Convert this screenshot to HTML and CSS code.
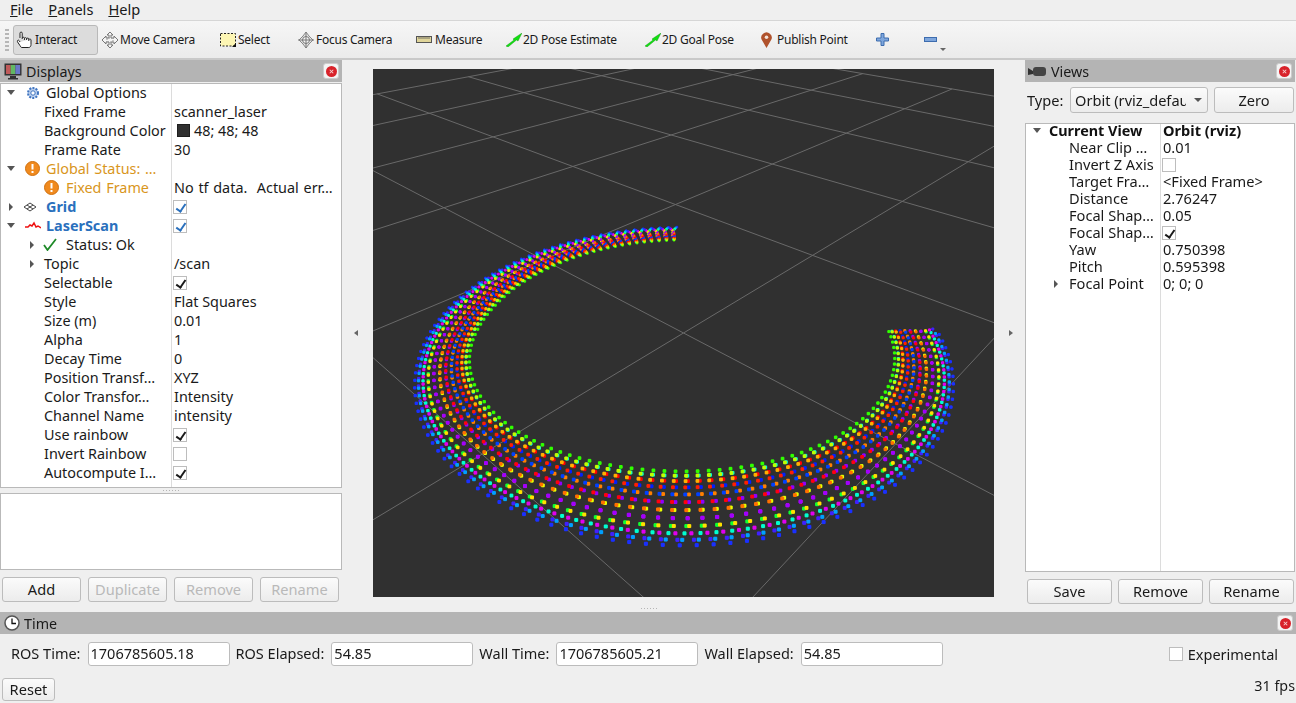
FILE: index.html
```html
<!DOCTYPE html>
<html lang="en">
<head>
<meta charset="utf-8">
<title>RViz</title>
<link rel="stylesheet" href="styles.css">
</head>
<body>
<nav class="menubar">
  <span class="menu"><u>F</u>ile</span>
  <span class="menu"><u>P</u>anels</span>
  <span class="menu"><u>H</u>elp</span>
</nav>
<div class="toolbar">
  <span class="grip"></span>
  <div class="tool tool-interact">
    <svg class="ic" width="20" height="20" viewBox="0 0 20 20"><path d="M5 8V3.200a1.100 1.100 0 0 1 2.200 0V9M7.200 8.200c0-1.300 2.200-1.300 2.200 0V10M9.400 8.600c0-1.200 2.200-1.200 2.200 0V10M11.600 9c0-1.200 2.200-1.200 2.200 0v2M13.800 9.600c.4-1 2.200-.8 2.200.4v4.600c0 1.400-.8 2.900-2.200 2.900H7c-1.200 0-1.600-1.200-2.200-2.200L2.600 12c-.8-1.600.9-2.600 1.700-1.200L5 12" fill="#fff" stroke="#222" stroke-width="1"/></svg>
    <span>Interact</span>
  </div>
  <div class="tool tool-move">
    <svg class="ic" width="18" height="18" viewBox="0 0 18 18"><path d="M9 1l3 3h-2v3h3V5l4 4-4 4v-2h-3v3h2l-3 3-3-3h2v-3H5v2L1 9l4-4v2h3V4H6z" fill="#f4f4f4" stroke="#777" stroke-width="1"/><path d="M6 7h6v4H6z" fill="none" stroke="#999" stroke-dasharray="1 1"/></svg>
    <span>Move Camera</span>
  </div>
  <div class="tool tool-select">
    <svg class="ic" width="16" height="14" viewBox="0 0 16 14"><rect x=".5" y=".5" width="15" height="12.500" fill="#fdf6b4" stroke="#222" stroke-dasharray="2 1.500"/><path d="M16 10v4h-4z" fill="#111"/></svg>
    <span>Select</span>
  </div>
  <div class="tool tool-focus">
    <svg class="ic" width="18" height="18" viewBox="0 0 18 18"><path d="M9 1l3 4 4 4-4 4-3 4-3-4-4-4 4-4z" fill="#e6e6e6" stroke="#888"/><circle cx="9" cy="9" r="3.500" fill="#f6f6f6" stroke="#777"/><path d="M9 1v16M1 9h16" stroke="#777" stroke-width="1"/></svg>
    <span>Focus Camera</span>
  </div>
  <div class="tool tool-measure">
    <svg class="ic" width="16" height="7" viewBox="0 0 16 7"><rect x=".5" y=".5" width="15" height="6" fill="#e0d59a" stroke="#555"/><path d="M3 1v2M5 1v2M7 1v2M9 1v2M11 1v2M13 1v2" stroke="#555" stroke-width=".8"/></svg>
    <span>Measure</span>
  </div>
  <div class="tool tool-pose">
    <svg class="ic" width="17" height="14" viewBox="0 0 17 14"><path d="M1 13L9 7l-1-1 9-6-4 8-1.500-1L3 14z" fill="#12e012" stroke="#0a8a0a" stroke-width=".4"/></svg>
    <span>2D Pose Estimate</span>
  </div>
  <div class="tool tool-goal">
    <svg class="ic" width="17" height="14" viewBox="0 0 17 14"><path d="M1 13L9 7l-1-1 9-6-4 8-1.500-1L3 14z" fill="#12e012" stroke="#0a8a0a" stroke-width=".4"/></svg>
    <span>2D Goal Pose</span>
  </div>
  <div class="tool tool-point">
    <svg class="ic" width="11" height="16" viewBox="0 0 11 16"><path d="M5.500 16L1.200 8.500A5.200 5.200 0 1 1 9.800 8.500z" fill="#b0522c"/><circle cx="5.500" cy="5.200" r="1.800" fill="#f2e4da"/></svg>
    <span>Publish Point</span>
  </div>
  <svg class="plus" width="13" height="13" viewBox="0 0 13 13"><path d="M5 .5h3v4.500h4.500v3H8v4.500H5V8H.5V5H5z" fill="#7ea6dc" stroke="#3d6cae"/></svg>
  <svg class="minus" width="13" height="5" viewBox="0 0 13 5"><rect x=".5" y=".5" width="12" height="4" fill="#7ea6dc" stroke="#3d6cae"/></svg>
  <span class="more"></span>
</div>

<main class="workspace">
  <section class="left">
    <header class="title">
      <svg class="title-ic" width="18" height="17" viewBox="0 0 18 17"><rect x=".5" y=".5" width="17" height="12" fill="#333"/><rect x="2" y="2" width="4.700" height="9" fill="#c05a5a"/><rect x="6.700" y="2" width="4.700" height="9" fill="#62b862"/><rect x="11.400" y="2" width="4.700" height="9" fill="#6a78c8"/><path d="M6 13h6v2h2v1.500H4V15h2z" fill="#333"/></svg>
      <span>Displays</span>
      <button class="close"><i></i></button>
    </header>
    <div class="tree tree-displays">
      <div class="row"><div class="name p7"><b class="arr open"></b><svg class="ri gear" width="14" height="14" viewBox="0 0 14 14"><circle cx="7" cy="7" r="5" fill="#bcd0ee" stroke="#3f74c0" stroke-width="2" stroke-dasharray="2 1.200"/><circle cx="7" cy="7" r="2.200" fill="#fff" stroke="#3f74c0"/></svg><span>Global Options</span></div><div class="val"></div></div>
      <div class="row"><div class="name p44"><span>Fixed Frame</span></div><div class="val">scanner_laser</div></div>
      <div class="row"><div class="name p44"><span>Background Color</span></div><div class="val"><i class="swatch"></i>48; 48; 48</div></div>
      <div class="row"><div class="name p44"><span>Frame Rate</span></div><div class="val">30</div></div>
      <div class="row warn"><div class="name p7"><b class="arr open"></b><svg class="ri warn-ic" width="15" height="15" viewBox="0 0 15 15"><circle cx="7.500" cy="7.500" r="7" fill="#f08a1e" stroke="#d0700e"/><rect x="6.500" y="3" width="2" height="5.500" fill="#fff"/><rect x="6.500" y="10" width="2" height="2" fill="#fff"/></svg><span>Global Status: …</span></div><div class="val"></div></div>
      <div class="row warn"><div class="name p44"><svg class="ri fix-ic" width="15" height="15" viewBox="0 0 15 15"><circle cx="7.500" cy="7.500" r="7" fill="#f08a1e" stroke="#d0700e"/><rect x="6.500" y="3" width="2" height="5.500" fill="#fff"/><rect x="6.500" y="10" width="2" height="2" fill="#fff"/></svg><span>Fixed Frame</span></div><div class="val plain">No tf data.&nbsp; Actual err…</div></div>
      <div class="row strong"><div class="name p7"><b class="arr"></b><svg class="ri grid-ic" width="14" height="10" viewBox="0 0 14 10"><path d="M7 1l6 4-6 4-6-4zM4 3l6 4M10 3L4 7" fill="none" stroke="#444"/></svg><span>Grid</span></div><div class="val"><i class="cb blue"></i></div></div>
      <div class="row strong"><div class="name p7"><b class="arr open"></b><svg class="ri laser-ic" width="16" height="9" viewBox="0 0 16 9"><path d="M0 6h3l2-2 2 1 2-3 2 4 2-1 3 2" fill="none" stroke="#ee1111" stroke-width="1.500"/></svg><span>LaserScan</span></div><div class="val"><i class="cb blue"></i></div></div>
      <div class="row"><div class="name p28"><b class="arr"></b><svg class="ri check-ic" width="14" height="13" viewBox="0 0 14 13"><path d="M1 7l3.500 5L13 1" fill="none" stroke="#1e8a28" stroke-width="1.800"/></svg><span>Status: Ok</span></div><div class="val"></div></div>
      <div class="row"><div class="name p28"><b class="arr a-topic"></b><span>Topic</span></div><div class="val">/scan</div></div>
      <div class="row"><div class="name p44"><span>Selectable</span></div><div class="val"><i class="cb on"></i></div></div>
      <div class="row"><div class="name p44"><span>Style</span></div><div class="val">Flat Squares</div></div>
      <div class="row"><div class="name p44"><span>Size (m)</span></div><div class="val">0.01</div></div>
      <div class="row"><div class="name p44"><span>Alpha</span></div><div class="val">1</div></div>
      <div class="row"><div class="name p44"><span>Decay Time</span></div><div class="val">0</div></div>
      <div class="row"><div class="name p44"><span>Position Transf…</span></div><div class="val">XYZ</div></div>
      <div class="row"><div class="name p44"><span>Color Transfor…</span></div><div class="val">Intensity</div></div>
      <div class="row"><div class="name p44"><span>Channel Name</span></div><div class="val">intensity</div></div>
      <div class="row"><div class="name p44"><span>Use rainbow</span></div><div class="val"><i class="cb on"></i></div></div>
      <div class="row"><div class="name p44"><span>Invert Rainbow</span></div><div class="val"><i class="cb"></i></div></div>
      <div class="row"><div class="name p44"><span>Autocompute I…</span></div><div class="val"><i class="cb on"></i></div></div>
    </div>
    <div class="hdots"></div>
    <div class="help-box"></div>
    <div class="btn-row">
      <button class="btn">Add</button>
      <button class="btn off">Duplicate</button>
      <button class="btn off">Remove</button>
      <button class="btn off">Rename</button>
    </div>
  </section>

  <div class="handle"><b class="tri-left"></b></div>

  <section class="center">
    <canvas id="view" width="621" height="528"></canvas>
    <div class="hdots bottom-dots"></div>
  </section>

  <div class="handle"><b class="tri-right"></b></div>

  <section class="right">
    <header class="title">
      <svg class="title-ic cam" width="18" height="9" viewBox="0 0 18 9"><path d="M0 1l5 3V2h0v5L0 8z" fill="#333"/><rect x="5" y="0" width="13" height="9" rx="3" fill="#444"/></svg>
      <span>Views</span>
      <button class="close"><i></i></button>
    </header>
    <div class="type-row">
      <span class="type-label">Type:</span>
      <div class="combo"><span>Orbit (rviz_default_plugins/Orbit)</span><b></b></div>
      <button class="btn zero">Zero</button>
    </div>
    <div class="tree tree-views">
      <div class="row head"><div class="name vp10"><b class="arr open"></b><span>Current View</span></div><div class="val">Orbit (rviz)</div></div>
      <div class="row"><div class="name vp44"><span>Near Clip …</span></div><div class="val">0.01</div></div>
      <div class="row"><div class="name vp44"><span>Invert Z Axis</span></div><div class="val"><i class="cb"></i></div></div>
      <div class="row"><div class="name vp44"><span>Target Fra…</span></div><div class="val">&lt;Fixed Frame&gt;</div></div>
      <div class="row"><div class="name vp44"><span>Distance</span></div><div class="val">2.76247</div></div>
      <div class="row"><div class="name vp44"><span>Focal Shap…</span></div><div class="val">0.05</div></div>
      <div class="row"><div class="name vp44"><span>Focal Shap…</span></div><div class="val"><i class="cb on"></i></div></div>
      <div class="row"><div class="name vp44"><span>Yaw</span></div><div class="val">0.750398</div></div>
      <div class="row"><div class="name vp44"><span>Pitch</span></div><div class="val">0.595398</div></div>
      <div class="row"><div class="name vp27"><b class="arr"></b><span>Focal Point</span></div><div class="val">0; 0; 0</div></div>
    </div>
    <div class="btn-row views-btns">
      <button class="btn">Save</button>
      <button class="btn">Remove</button>
      <button class="btn">Rename</button>
    </div>
  </section>
</main>

<section class="time">
  <header class="title">
    <svg class="title-ic" width="16" height="16" viewBox="0 0 16 16"><circle cx="8" cy="8" r="7" fill="#fff" stroke="#555" stroke-width="1.500"/><path d="M8 3.500V8.500H12" fill="none" stroke="#111" stroke-width="1.300"/></svg>
    <span>Time</span>
    <button class="close"><i></i></button>
  </header>
  <div class="time-row">
    <label>ROS Time:</label><input class="field" value="1706785605.18">
    <label>ROS Elapsed:</label><input class="field" value="54.85">
    <label>Wall Time:</label><input class="field" value="1706785605.21">
    <label>Wall Elapsed:</label><input class="field" value="54.85">
    <i class="cb exp"></i><span class="exp-label">Experimental</span>
  </div>
  <div class="status-row">
    <button class="btn reset">Reset</button>
    <span class="fps">31 fps</span>
  </div>
</section>
<script src="script.js"></script>
</body>
</html>
```

FILE: styles.css
```css
* { box-sizing: border-box; }
html, body { margin: 0; padding: 0; }
body {
  width: 1296px;
  height: 703px;
  overflow: hidden;
  background: #efefef;
  color: #1a1a1a;
  font: 14.600px/19px "Noto Sans", "DejaVu Sans", sans-serif;
  display: flex;
  flex-direction: column;
}
body > * { flex: none; }
button, input { font: inherit; color: inherit; }

.menubar { height: 20px; display: flex; padding-left: 10px; gap: 15px; line-height: 18px; }

.toolbar {
  height: 40px;
  border-top: 1px solid #d6d6d6;
  border-bottom: 2px solid #c9c9c9;
  background: linear-gradient(#f6f6f6, #ebebeb);
  display: flex;
  align-items: center;
  font-size: 12px;
  letter-spacing: -.25px;
  padding-left: 5px;
}
.grip { width: 4px; height: 24px; margin-right: 4px; background: radial-gradient(circle, #b5b5b5 .7px, transparent 1px) 0 0 / 2px 4px; }
.tool { display: flex; align-items: center; height: 30px; }
.tool-interact { width: 85px; border: 1px solid #b9b9b9; border-radius: 3px; background: #dcdcdc; padding-left: 1px; }
.tool-move { margin-left: 3px; width: 119px; }
.tool-move .ic { margin-right: 1px; }
.tool-select { width: 77px; }
.tool-select .ic { margin-right: 2px; }
.tool-focus { width: 119px; }
.tool-focus .ic { margin-right: 1px; }
.tool-measure { width: 89px; }
.tool-measure .ic { margin-right: 3px; }
.tool-pose { width: 139px; }
.tool-pose .ic { margin-right: 1px; }
.tool-goal { width: 117px; }
.tool-goal .ic { margin-right: 1px; }
.tool-point { width: 115px; }
.tool-point .ic { margin-right: 5px; }
.plus { margin-right: 35px; flex: none; }
.minus { flex: none; }
.more { width: 0; height: 0; margin: 20px 0 0 3px; border: 3px solid transparent; border-top: 3px solid #666; border-bottom: 0; }

.workspace { height: 552px; display: flex; }
.left { width: 342px; display: flex; flex-direction: column; }
.right { width: 270px; display: flex; flex-direction: column; }
.handle { width: 31px; display: flex; align-items: center; justify-content: center; height: 546px; }
.handle b { width: 0; height: 0; border: 3px solid transparent; }
.tri-left { border-left: 0 !important; border-right: 4px solid #666 !important; margin-right: 3px; }
.tri-right { border-right: 0 !important; border-left: 4px solid #666 !important; margin-left: 3px; }
.center { width: 621px; padding-top: 9px; display: flex; flex-direction: column; }
#view { display: block; width: 621px; height: 528px; background: #303030; }

.title {
  height: 22px;
  background: #b4b4b4;
  display: flex;
  align-items: center;
  font-size: 14.300px;
  flex: none;
}
.title span { padding-top: 1px; }
.left .title { margin-bottom: 1px; }
.title-ic { margin: 0 4px 0 4px; flex: none; }
.cam { margin: 0 5px 0 3px; }
.close {
  margin-left: auto;
  margin-right: 3px;
  width: 16px;
  height: 16px;
  padding: 0;
  border: 1px solid #ccc;
  border-radius: 3px;
  background: #f4f4f4;
  display: flex;
  align-items: center;
  justify-content: center;
}
.close i { width: 11px; height: 11px; border-radius: 50%; background: #d8222a; position: relative; display: block; }
.close i::before, .close i::after { content: ""; position: absolute; left: 3px; top: 5px; width: 5px; height: 1px; background: #f6d0d0; transform: rotate(45deg); }
.close i::after { transform: rotate(-45deg); }

.tree {
  border: 1px solid #b9b9b9;
  background: linear-gradient(#dcdcdc, #dcdcdc) no-repeat, #fff;
  flex: none;
  overflow: hidden;
}
.tree-displays { height: 405px; background-position: 170px 0; background-size: 1px 100%; font-size: 14.400px; }
.tree-displays .row:first-child { margin-top: -1px; }
.tree-views { height: 449px; background-position: 134px 0; background-size: 1px 100%; margin-top: 10px; }
.tree-views .row:first-child { margin-top: -2px; }

.row { display: flex; height: 19px; align-items: center; white-space: nowrap; }
.tree-views .row { height: 17px; }
.name { width: 170px; display: flex; align-items: center; flex: none; }
.p7 { padding-left: 6px; }
.p28 { padding-left: 27px; }
.p44 { padding-left: 43px; }
.val { padding-left: 3px; display: flex; align-items: center; }
.arr { width: 0; height: 0; flex: none; border: 4px solid transparent; border-left: 4px solid #555; border-right: 0; margin-left: 2px; margin-right: 9px; }
.arr.open { border: 4px solid transparent; border-top: 5px solid #555; border-bottom: 0; margin-left: 0; margin-right: 10px; }
.a-topic { margin-right: 10px; }
.ri { flex: none; margin-right: 7px; }
.gear { margin-left: 1px; margin-right: 6px; }
.warn-ic { margin-right: 6px; }
.fix-ic { margin-right: 7px; }
.grid-ic { margin-left: 1px; margin-right: 9px; }
.laser-ic { margin-left: 0; margin-right: 5px; }
.check-ic { margin-right: 9px; }
.warn .name { color: #d9961c; word-spacing: 1px; }
.plain { color: #1a1a1a; word-spacing: 1px; }
.strong .name { color: #2a70bd; font-weight: 700; }
.swatch { width: 13px; height: 13px; margin: 0 4px 0 3px; background: #303030; border: 1px solid #1e1e1e; display: block; }

.cb { display: block; width: 14px; height: 14px; margin-left: -1px; border: 1px solid #bdbdbd; background: #fff; position: relative; }
.cb.on::after, .cb.blue::after {
  content: "";
  position: absolute;
  left: 4px;
  top: 1px;
  width: 4px;
  height: 8px;
  border: solid #1a1a1a;
  border-width: 0 2px 2px 0;
  transform: rotate(35deg);
}
.cb.blue::after { border-color: #2a70bd; }

.hdots { height: 5px; background-image: repeating-linear-gradient(90deg, #b5b5b5 0 1px, transparent 1px 3px); background-size: 17px 1px; background-position: center; background-repeat: no-repeat; flex: none; }
.bottom-dots { width: 17px; height: 1px; margin: 11px 0 0 268px; }

.help-box { height: 77px; border: 1px solid #b9b9b9; background: #fff; flex: none; }

.btn-row { display: flex; margin-top: 7px; padding-left: 2px; gap: 7px; }
.btn {
  width: 79px;
  height: 25px;
  padding: 0;
  border: 1px solid #bcbcbc;
  border-radius: 3px;
  background: linear-gradient(#fbfbfb, #ececec);
}
.btn.off { color: #b9b9b9; }
.views-btns { padding-left: 2px; gap: 6px; }
.views-btns .btn { width: 85px; }

.type-row { display: flex; align-items: center; height: 26px; margin-top: 5px; padding-left: 2px; }
.type-label { width: 43px; flex: none; }
.combo {
  width: 138px;
  height: 26px;
  border: 1px solid #bcbcbc;
  border-radius: 3px;
  background: linear-gradient(#fbfbfb, #ececec);
  padding-left: 4px;
  display: flex;
  align-items: center;
  overflow: hidden;
  white-space: nowrap;
  position: relative;
}
.combo b { position: absolute; right: 5px; top: 10px; width: 0; height: 0; border: 4px solid transparent; border-top: 4px solid #555; border-bottom: 0; }
.combo span { width: 111px; overflow: hidden; }
.zero { width: 80px; height: 26px; margin-left: 6px; }
.vp10 { padding-left: 7px; }
.vp10 .arr { margin-right: 8px; }
.vp27 { padding-left: 26px; }
.vp27 .arr { margin-right: 11px; }
.vp44 { padding-left: 43px; }
.tree-views .name { width: 134px; }
.head { font-weight: 700; color: #111; }
.head span { font-size: 14.400px; }

.time { height: 91px; display: flex; flex-direction: column; }
.time-row { display: flex; align-items: center; height: 24px; margin-top: 8px; padding-left: 11px; font-size: 14.500px; }
.time-row label { margin-right: 7px; padding-bottom: 1px; white-space: nowrap; }
.field {
  width: 142px;
  height: 24px;
  border: 1px solid #bcbcbc;
  border-radius: 3px;
  background: #fff;
  padding: 0 2px 2px;
  margin-right: 6px;
  outline: 0;
}
.exp { margin-left: 220px; margin-right: 5px; flex: none; }
.status-row { display: flex; align-items: flex-start; justify-content: space-between; padding: 0 1px 0 2px; margin-top: 12px; }
.reset { width: 53px; height: 23px; }
.fps { font-size: 14.300px; margin-top: -2px; }
```

FILE: script.js
```js
(function () {
  var canvas = document.getElementById('view');
  var ctx = canvas.getContext('2d');
  var W = canvas.width, H = canvas.height;
  var yaw = 0.750398, pitch = 0.595398, dist = 2.76247;
  var f = (H / 2) / Math.tan(Math.PI / 8);
  var cy = Math.cos(yaw), sy = Math.sin(yaw), cp = Math.cos(pitch), sp = Math.sin(pitch);
  var C = [dist * cy * cp, dist * sy * cp, dist * sp];
  var F = [-cy * cp, -sy * cp, -sp];
  var R = [-sy, cy, 0];
  var U = [-cy * sp, -sy * sp, cp];
  function dot(a, b) { return a[0] * b[0] + a[1] * b[1] + a[2] * b[2]; }
  function view(p) {
    var v = [p[0] - C[0], p[1] - C[1], p[2] - C[2]];
    return [dot(v, R), dot(v, U), dot(v, F)];
  }
  function screen(v) {
    return [W / 2 + f * v[0] / v[2], H / 2 - f * v[1] / v[2]];
  }
  ctx.fillStyle = '#303030';
  ctx.fillRect(0, 0, W, H);
  ctx.strokeStyle = '#696969';
  ctx.lineWidth = 1;
  function line(a, b) {
    var va = view(a), vb = view(b), near = 0.05;
    if (va[2] < near && vb[2] < near) return;
    if (va[2] < near || vb[2] < near) {
      var t = (near - va[2]) / (vb[2] - va[2]);
      var c = [va[0] + (vb[0] - va[0]) * t, va[1] + (vb[1] - va[1]) * t, near];
      if (va[2] < near) va = c; else vb = c;
    }
    var sa = screen(va), sb = screen(vb);
    ctx.beginPath();
    ctx.moveTo(sa[0], sa[1]);
    ctx.lineTo(sb[0], sb[1]);
    ctx.stroke();
  }
  for (var g = -5; g <= 5; g++) {
    line([g, -5, 0], [g, 5, 0]);
    line([-5, g, 0], [5, g, 0]);
  }
  function lerp(table, u) {
    for (var i = 0; i < table.length - 1; i++) {
      if (u <= table[i + 1][0]) {
        var t = (u - table[i][0]) / (table[i + 1][0] - table[i][0]);
        t = t * t * (3 - 2 * t);
        return table[i][1] + (table[i + 1][1] - table[i][1]) * t;
      }
    }
    return table[table.length - 1][1];
  }
  var radius = [[0, 1.0], [90, 1.0], [180, 0.955], [280, 1.0]];
  var amp = [[0, 0.085], [90, 0.1], [180, 0.145], [280, 0.105]];
  var colours = ['#1a30ff', '#00a0ff', '#00ffd0', '#10ff30', '#e000ff', '#e8ff00', '#9000ff', '#ff8000', '#0020ff', '#ff0000', '#00ffd0',
    '#30ff00', '#c0ff00', '#ffb000', '#ff2000', '#0040ff', '#ff0010', '#ff7000', '#a000ff', '#ffe000', '#e000f0', '#4020ff'];
  var perTurn = colours.length, turns = 105, total = turns * perTurn;
  var start = 2, end = 272;
  for (var i = 0; i < total; i++) {
    var u = start + (end - start) * i / total;
    var phi = 2 * Math.PI * i / perTurn;
    var frac = (i % perTurn) / perTurn;
    var tri = 1 - 4 * Math.abs(frac - 0.5);
    tri = -tri;
    var wave = 0.35 * Math.cos(phi) + 0.65 * tri;
    var r = lerp(radius, u) + lerp(amp, u) * wave;
    var th = yaw + Math.PI + u * Math.PI / 180 + 0.016 * Math.sin(phi);
    var v = view([r * Math.cos(th), r * Math.sin(th), 0]);
    var s = screen(v);
    var size = 0.009 * f / v[2] + 1;
    ctx.fillStyle = colours[i % perTurn];
    ctx.fillRect(s[0] - size / 2, s[1] - (size - 1) / 2, size, size - 1);
    ctx.fillRect(s[0] - (size - 1) / 2, s[1] - size / 2, size - 1, size);
  }
})();
```
